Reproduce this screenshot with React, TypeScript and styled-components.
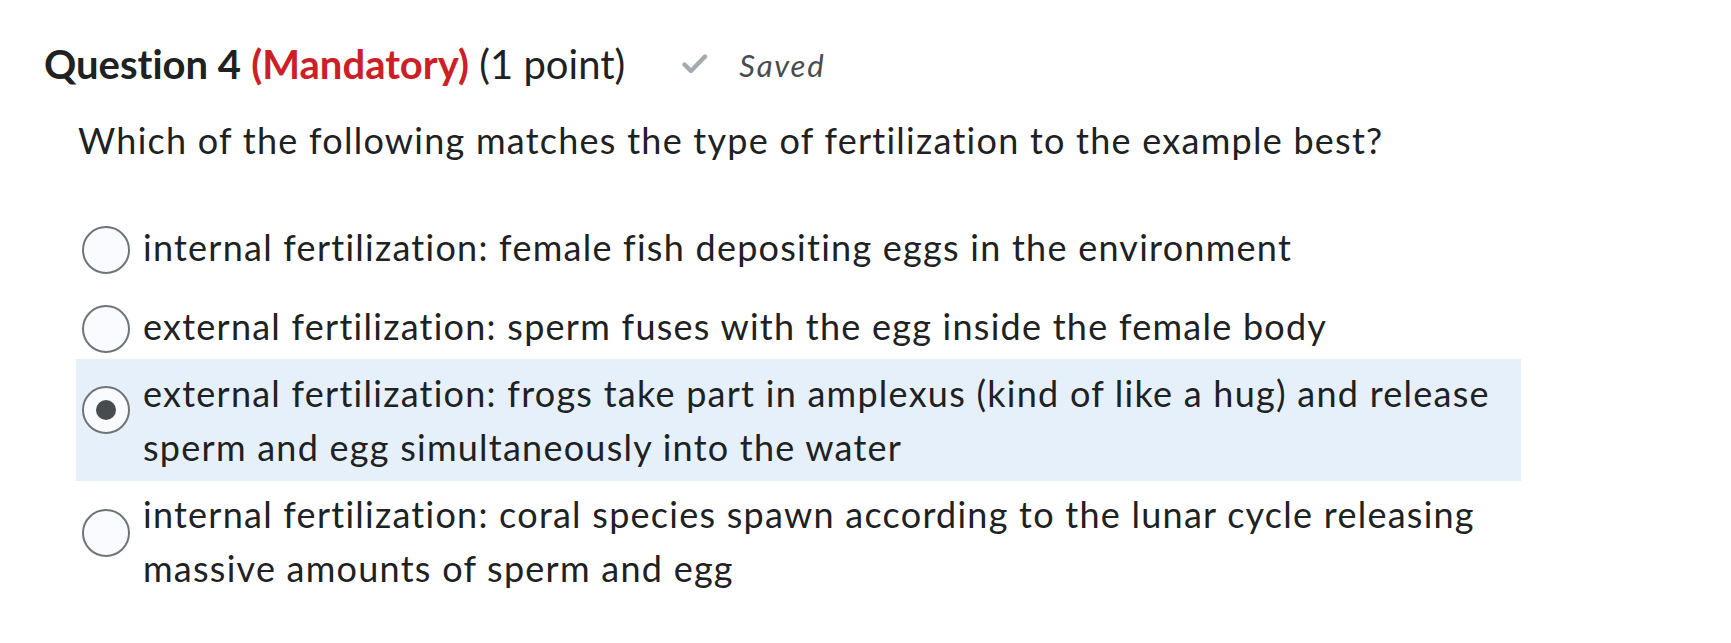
import styled, { createGlobalStyle } from 'styled-components';
import { FC } from 'react';

const GlobalStyle = createGlobalStyle`
  body {
    margin: 0;
    background: #ffffff;
    font-family: Lato, "Noto Sans", sans-serif;
    color: #202122;
    font-variant-ligatures: none;
    font-feature-settings: "liga" 0, "clig" 0;
  }
`;

type Choice = {
  text: string;
  selected?: boolean;
  multiline?: boolean;
  spaced?: boolean;
};

const choices: Choice[] = [
  { text: 'internal fertilization: female fish depositing eggs in the environment', spaced: true },
  { text: 'external fertilization: sperm fuses with the egg inside the female body' },
  {
    text: 'external fertilization: frogs take part in amplexus (kind of like a hug) and release sperm and egg simultaneously into the water',
    selected: true,
    multiline: true,
  },
  {
    text: 'internal fertilization: coral species spawn according to the lunar cycle releasing massive amounts of sperm and egg',
    multiline: true,
  },
];

const CheckIcon: FC = () => (
  <svg width="27" height="22" viewBox="0 0 27 22" fill="none">
    <path d="M3.5 11.5 L10 18 L24 3.5" stroke="#a4abb0" strokeWidth="4.4" strokeLinecap="round" strokeLinejoin="round" />
  </svg>
);

export default function App() {
  return (
    <>
      <GlobalStyle />
      <Page>
        <Heading>
          <Strong>Question 4</Strong> <Mandatory>(Mandatory)</Mandatory> <Points>(1 point)</Points>
          <Saved>
            <CheckIcon />
            <SavedLabel>Saved</SavedLabel>
          </Saved>
        </Heading>
        <Body>
          <Prompt>Which of the following matches the type of fertilization to the example best?</Prompt>
          <Choices>
            {choices.map((c) => (
              <ChoiceRow key={c.text} selected={!!c.selected} spaced={!!c.spaced}>
                <Radio selected={!!c.selected} multiline={!!c.multiline} />
                <ChoiceText>{c.text}</ChoiceText>
              </ChoiceRow>
            ))}
          </Choices>
        </Body>
      </Page>
    </>
  );
}

const Page = styled.div`
  padding: 40px 0 0 44px;
  width: 1540px;
`;

const Heading = styled.h2`
  margin: 0;
  font-size: 40px;
  line-height: 48px;
  font-weight: 400;
  letter-spacing: 0;
  color: #202122;
`;

const Strong = styled.span`
  font-weight: 700;
`;

const Mandatory = styled.span`
  font-weight: 700;
  color: #cd2026;
`;

const Points = styled.span`
  font-weight: 400;
`;

const Saved = styled.span`
  display: inline-flex;
  align-items: center;
  gap: 31px;
  margin-left: 56px;
  vertical-align: top;
  height: 48px;
`;

const SavedLabel = styled.span`
  font-size: 31px;
  font-style: italic;
  color: #494c4e;
  letter-spacing: 1.8px;
  line-height: 36px;
  margin-top: 1px;
`;

const Body = styled.div`
  padding-left: 34px;
  margin-top: 25px;
`;

const Prompt = styled.p`
  margin: 0;
  font-size: 36px;
  line-height: 54px;
  letter-spacing: 1.25px;
`;

const Choices = styled.div`
  display: flex;
  flex-direction: column;
  margin: 47px 0 0 -2px;
  width: 1445px;
`;

const ChoiceRow = styled.div<{ selected: boolean; spaced: boolean }>`
  display: flex;
  align-items: flex-start;
  gap: 13px;
  padding: ${(p) => (p.selected ? '7px 6px' : '6px 6px')};
  margin-bottom: ${(p) => (p.spaced ? '13px' : '0')};
  background: ${(p) => (p.selected ? '#e6f0fb' : 'transparent')};
`;

const Radio = styled.span<{ selected: boolean; multiline: boolean }>`
  flex: none;
  box-sizing: border-box;
  width: 48px;
  height: 48px;
  margin-top: ${(p) => (p.multiline ? (p.selected ? '20px' : '22px') : '6px')};
  border-radius: 50%;
  border: 2px solid #6e7477;
  background: #f9fbff;
  display: flex;
  align-items: center;
  justify-content: center;

  &::after {
    content: '';
    display: ${(p) => (p.selected ? 'block' : 'none')};
    width: 20px;
    height: 20px;
    border-radius: 50%;
    background: #494c4e;
  }
`;

const ChoiceText = styled.span`
  font-size: 36px;
  line-height: 54px;
  letter-spacing: 1.25px;
  flex: 1;
`;
